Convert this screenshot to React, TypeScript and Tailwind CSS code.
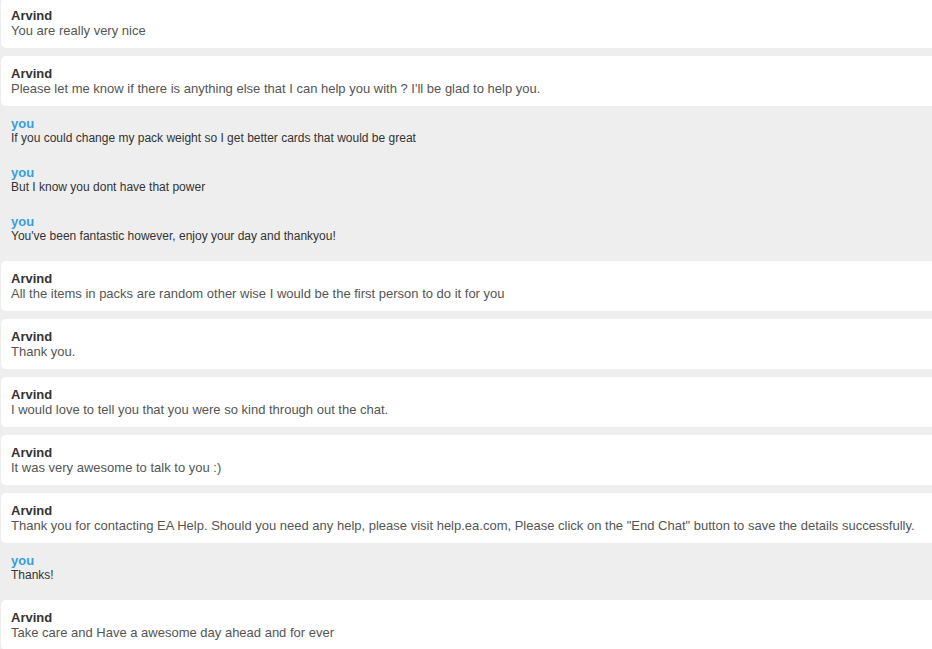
const font = { fontFamily: '"Liberation Sans", Arial, sans-serif' };

type Msg = { from: "agent" | "you"; text: string };

const groups: Msg[][] = [
  [{ from: "agent", text: "You are really very nice" }],
  [{ from: "agent", text: "Please let me know if there is anything else that I can help you with ? I'll be glad to help you." }],
  [
    { from: "you", text: "If you could change my pack weight so I get better cards that would be great" },
    { from: "you", text: "But I know you dont have that power" },
    { from: "you", text: "You've been fantastic however, enjoy your day and thankyou!" },
  ],
  [{ from: "agent", text: "All the items in packs are random other wise I would be the first person to do it for you" }],
  [{ from: "agent", text: "Thank you." }],
  [{ from: "agent", text: "I would love to tell you that you were so kind through out the chat." }],
  [{ from: "agent", text: "It was very awesome to talk to you :)" }],
  [{ from: "agent", text: 'Thank you for contacting EA Help. Should you need any help, please visit help.ea.com, Please click on the "End Chat" button to save the details successfully.' }],
  [{ from: "you", text: "Thanks!" }],
  [{ from: "agent", text: "Take care and Have a awesome day ahead and for ever" }],
];

function AgentCard({ text }: { text: string }) {
  return (
    <div className="mb-2 ml-px mr-[-12px] h-[50px] shrink-0 rounded-[5px] bg-white px-[10px] pt-[10px]">
      <div className="text-[13px] font-bold leading-[15px] text-[#333]">Arvind</div>
      <div className="text-[13px] leading-[15px] text-[#555]">{text}</div>
    </div>
  );
}

function YouBlock({ items }: { items: Msg[] }) {
  return (
    <div className="-mt-2 flex flex-col gap-[19px] px-[11px] pt-[10px] pb-[17px]">
      {items.map((m, i) => (
        <div key={i} className="h-[30px]">
          <div className="text-[13px] font-bold leading-[15px] text-[#35a0dc]">you</div>
          <div className="text-[12px] leading-[15px] text-[#333]">{m.text}</div>
        </div>
      ))}
    </div>
  );
}

export default function App() {
  return (
    <div className="h-[649px] w-[932px] overflow-hidden bg-[#eeeeee]" style={font}>
      <div className="-mt-[2px] flex flex-col">
        {groups.map((g, i) =>
          g[0].from === "agent" ? (
            <AgentCard key={i} text={g[0].text} />
          ) : (
            <YouBlock key={i} items={g} />
          )
        )}
      </div>
    </div>
  );
}
